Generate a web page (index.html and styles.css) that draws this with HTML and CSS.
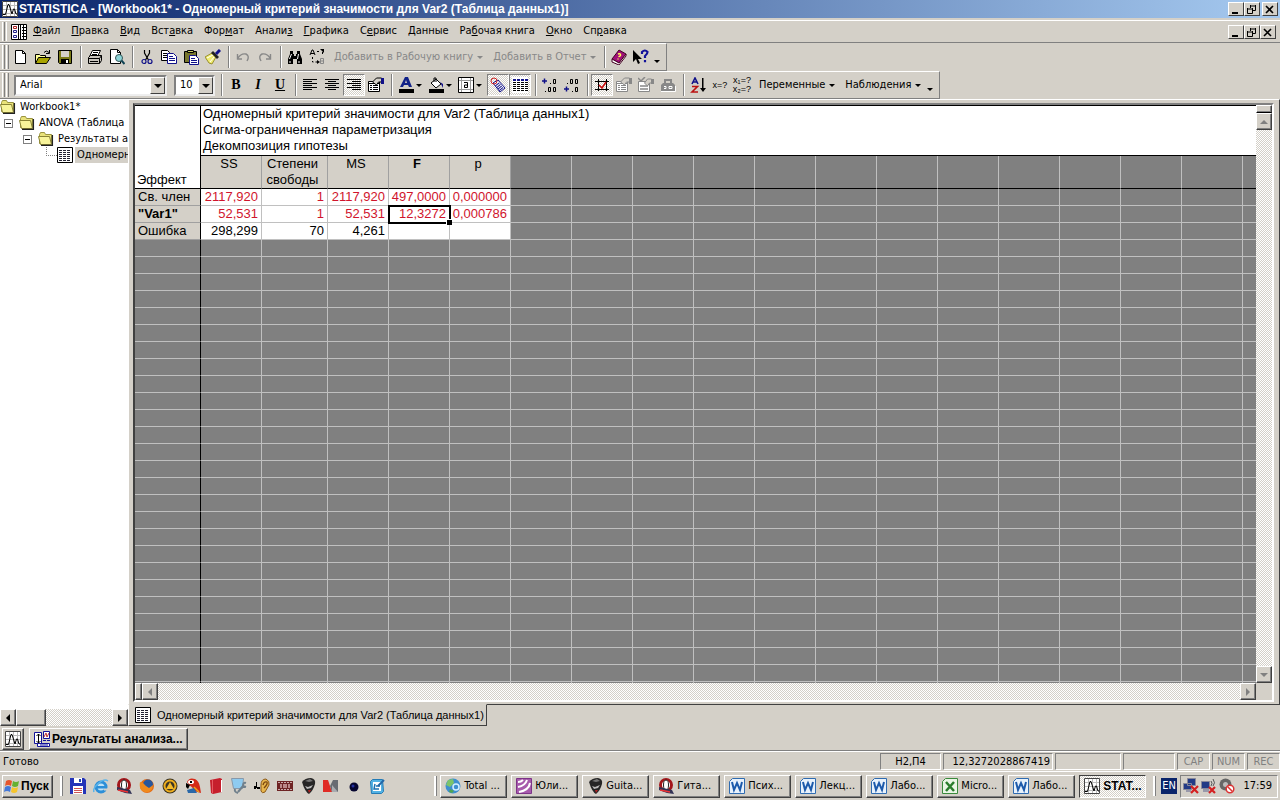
FILE: index.html
```html
<!DOCTYPE html>
<html lang="ru">
<head>
<meta charset="utf-8">
<title>STATISTICA - [Workbook1*]</title>
<link rel="stylesheet" href="styles.css">
</head>
<body>
<svg class="defs" aria-hidden="true">
  <symbol id="stat" viewBox="0 0 16 16"><path fill="#fff" d="M0 0h16v16H0z"/><path stroke="#bbb" fill="none" d="M4.500 0v16M8.500 0v16M12.500 0v16M0 4.500h16M0 8.500h16M0 12.500h16"/><path stroke="#000" fill="none" d="M1 13.500h2.500l2.500-10h1l3 9.500 1.500-5h1l1.500 5h1"/><path stroke="#444" fill="none" d="M.5.500h15v15H.5z"/></symbol>
  <symbol id="book" viewBox="0 0 16 16"><path fill="#fff" stroke="#000" d="M.5.500h15v15H.5z"/><path stroke="#000" d="M7.500 0v16M9.500 0v16M11 3.500h4M11 6.500h4M11 9.500h4M11 12.500h4M12.500 1v14"/><path fill="#fff" stroke="#a22" d="M2.500 2.500h3v2h-3z"/><path fill="#fff" stroke="#228" d="M2.500 6.500h3v2h-3zM2.500 11.500h3v2h-3z"/></symbol>
  <symbol id="sheet" viewBox="0 0 16 16"><path fill="#fff" stroke="#000" d="M.5.500h15v15H.5z"/><path stroke="#223" stroke-dasharray="3 1" d="M2 3.500h12M2 5.500h12M2 7.500h12M2 9.500h12M2 11.500h12M2 13.500h12"/></symbol>
  <symbol id="folder" viewBox="0 0 16 16"><path fill="#e9e27a" stroke="#9a9440" d="M1.500 3.500l1-2h4l1 2h6v9h-12z"/><path fill="#f8f49a" stroke="#8a8436" d="M.5 5.500h11l2 8h-11z"/><path stroke="#222" stroke-width="1.300" fill="none" d="M3 14.400h11.400V4"/></symbol>
  <symbol id="new" viewBox="0 0 16 16"><path fill="#fff" stroke="#000" d="M2.500 1.500h7l3 3v10h-10z"/><path fill="none" stroke="#000" d="M9.500 1.500v3h3"/></symbol>
  <symbol id="open" viewBox="0 0 16 16"><path fill="#ff9" stroke="#000" d="M.5 14V5.500h4l1 1h5v3"/><path fill="#a9a400" stroke="#000" d="M.5 14.500l3-6h12l-4 6z"/><path fill="none" stroke="#000" d="M9 3.500q2-3 5 0M14.500 1v3.500H11"/></symbol>
  <symbol id="save" viewBox="0 0 16 16"><path fill="#7b7b18" stroke="#000" d="M1.500 1.500h13v13h-12l-1-1z"/><path fill="#d4d0c8" d="M4 2h8v6H4z"/><path d="M4 10h8v5H4z"/><path fill="#fff" d="M9 11h2v3H9z"/></symbol>
  <symbol id="print" viewBox="0 0 16 16"><path fill="#fff" stroke="#000" d="M5.500 1.500h8l-3 6h-8z"/><path stroke="#000" d="M6 3.500h5M5 5.500h5"/><path fill="#c8c4bc" stroke="#000" d="M1.500 8.500l2-2h11l-2 3v5h-11zM1.500 9.500h11M14.500 6.500v5l-2 3M3 12.500h8"/></symbol>
  <symbol id="preview" viewBox="0 0 16 16"><path fill="#fff" stroke="#000" d="M1.500.500h7l3 3v11h-10z"/><path fill="none" stroke="#000" d="M8.500.500v3h3"/><circle cx="10" cy="9" r="3.500" fill="#8ed4d8" stroke="#355"/><path stroke="#145" stroke-width="2" d="M12.500 11.500l3 3.500"/></symbol>
  <symbol id="cut" viewBox="0 0 16 16"><path stroke="#000" stroke-width="1.200" fill="none" d="M5.500 1v3l4 7M10.500 1v3l-4 7"/><circle cx="5" cy="12.500" r="2" fill="none" stroke="#118" stroke-width="1.200"/><circle cx="11" cy="12.500" r="2" fill="none" stroke="#118" stroke-width="1.200"/></symbol>
  <symbol id="copy" viewBox="0 0 16 16"><path fill="#fff" stroke="#000" d="M.5 1.500h6l2 2v8h-8z"/><path stroke="#000" d="M2 4.500h4M2 6.500h4M2 8.500h4"/><path fill="#fff" stroke="#118" d="M6.500 4.500h6l3 3v7h-9z"/><path stroke="#118" d="M8 7.500h4M8 9.500h6M8 11.500h6"/></symbol>
  <symbol id="paste" viewBox="0 0 16 16"><path fill="#77752c" stroke="#000" d="M1.500 2.500h12v11h-12z"/><path fill="#cc6" stroke="#000" d="M4.500 3.500v-2h6v2z"/><path fill="#fff" stroke="#118" d="M6.500 6.500h6l3 3v6h-9z"/><path stroke="#118" d="M8 9.500h4M8 11.500h6M8 13.500h6"/></symbol>
  <symbol id="brush" viewBox="0 0 16 16"><path fill="#f0ec70" stroke="#998f30" d="M0 8l7-4 4 4-4 7-3-1-2-3z"/><path stroke="#fff" d="M2 9l6-3M5 13l4-5"/><path fill="#222" d="M6 4l2-2 6 6-2 2z"/><path stroke="#118" stroke-width="3" d="M11 5l4-4"/></symbol>
  <symbol id="undo" viewBox="0 0 16 16"><path fill="none" stroke="#888" stroke-width="1.400" d="M3 9q3-5 8-4 4 2 1 7M2.500 5v5H7"/></symbol>
  <symbol id="redo" viewBox="0 0 16 16"><path fill="none" stroke="#888" stroke-width="1.400" d="M13 9Q10 4 5 5q-4 2-1 7M13.500 5v5H9"/></symbol>
  <symbol id="find" viewBox="0 0 16 16"><path d="M3 2h3v3h1v2h2V5h1V2h3v3l2 5v5h-5v-5H6v5H1v-5l2-5z"/><path stroke="#fff" d="M4.500 5L2.500 10M11.500 5l-1 5M3 12v2M12 12v2"/></symbol>
  <symbol id="replace" viewBox="0 0 16 16"><path fill="none" stroke="#000" d="M1 6l2-5h1l2 5M2 4.500h3"/><path fill="none" stroke="#000" stroke-dasharray="2 2" d="M8 2.500h4M13.500 3v4M3.500 8v5h5"/><path d="M11 0h4v4zM8 11l3 2-3 2z"/><path fill="none" stroke="#888" d="M11.500 9.500h3v5h-3zM11.500 12h3"/></symbol>
  <symbol id="help" viewBox="0 0 16 16"><path fill="#a0107a" stroke="#402" d="M1 10L8 1l7 4-7 9z"/><path fill="#fff" stroke="#402" d="M1 10v3l7 3 7-9V5l-7 9z"/><path fill="none" stroke="#ff5" stroke-width="1.400" d="M7 5q3-1 2.500 1.500L7.500 8M7 9.500v1"/></symbol>
  <symbol id="what" viewBox="0 0 16 16"><path d="M0 1v12l3-3 2 5 2-1-2-4h4z"/><path fill="none" stroke="#119" stroke-width="2.200" d="M9 5V3q3-3 5.500 0 0 2-2.500 4v2M12 11v2.300"/></symbol>
  <symbol id="left" viewBox="0 0 16 16"><path stroke="#000" d="M1 2.500h14M1 4.500h9M1 6.500h14M1 8.500h9M1 10.500h14M1 12.500h9"/></symbol>
  <symbol id="center" viewBox="0 0 16 16"><path stroke="#000" d="M1 2.500h14M4 4.500h8M1 6.500h14M4 8.500h8M1 10.500h14M4 12.500h8"/></symbol>
  <symbol id="right" viewBox="0 0 16 16"><path stroke="#000" d="M1 2.500h14M6 4.500h9M1 6.500h14M6 8.500h9M1 10.500h14M6 12.500h9"/></symbol>
  <symbol id="props" viewBox="0 0 16 16"><path fill="#fff" stroke="currentColor" d="M.5 4.500h11v10H.5z"/><path stroke="currentColor" d="M1 6.500h10M2 8.500h2M5 8.500h5M2 10.500h2M5 10.500h5M2 12.500h2M5 12.500h5"/><path fill="#d4d0c8" stroke="currentColor" d="M4.500 5l4-4h5v4h-3l-2 3z"/><path fill="var(--cuff,#118)" d="M13 1h3v6h-3z"/></symbol>
  <symbol id="check" viewBox="0 0 16 16"><path fill="#fff" stroke="currentColor" d="M.5 4.500h11v10H.5z"/><path stroke="currentColor" stroke-width="1.500" fill="none" d="M2 9h8M2 12h8M0 1l3 3 4-4"/><path fill="#d4d0c8" stroke="currentColor" d="M6.500 6l3-4h4v4h-2l-2 3z"/><path fill="currentColor" d="M13 2h3v5h-3z"/></symbol>
  <symbol id="bag" viewBox="0 0 16 16"><path fill="none" stroke="currentColor" stroke-width="2" d="M5 6V3h6v3"/><path fill="currentColor" d="M3 6h10l2 2v6H1V8z"/><path stroke="#fff" fill="none" d="M1 14.500h14.500V9M4 9.500h2v2H4M9 9.500h3v2H9z"/></symbol>
  <symbol id="color" viewBox="0 0 16 16"><path fill="#128" d="M7 0h3l4 10h-3l-1-2H6l-1 2H2zM8 3L7 6h2z"/><path d="M1 12h15v4H1z"/></symbol>
  <symbol id="fill" viewBox="0 0 16 16"><path fill="#fff" stroke="#000" d="M3 6l5-4 5 5-5 4zM6 5V1h2v4"/><path fill="#118" d="M12 5l3 2v4z"/><path d="M1 12h15v4H1z"/></symbol>
  <symbol id="border" viewBox="0 0 16 16"><path fill="#fff" stroke="#000" d="M.5.500h15v15H.5z"/><path stroke="#999" d="M1 3.500h14M1 12.500h14M3.500 1v14M12.500 1v14"/><path fill="none" stroke="#000" d="M6 5.500h3.500v5h-3v-2.500h3"/></symbol>
  <symbol id="tag" viewBox="0 0 16 16"><path fill="#fff" stroke="#118" d="M3 6l5-3 7 8-5 4z"/><path stroke="#118" stroke-dasharray="1 1" stroke-width="5" d="M7 7l5 6"/><circle cx="4" cy="4" r="3" fill="none" stroke="#c22"/></symbol>
  <symbol id="lines" viewBox="0 0 16 16"><path fill="#fff" d="M0 0h16v16H0z"/><path stroke="#118" stroke-dasharray="3 1" stroke-width="2" d="M1 3h15"/><path stroke="#000" stroke-dasharray="3 1" d="M1 5.500h15M1 7.500h15M1 9.500h15M1 11.500h15M1 13.500h15"/></symbol>
  <symbol id="decinc" viewBox="0 0 16 16"><path fill="none" stroke="#118" stroke-width="1.500" d="M0 4h5M2.500 1.500v5"/><path fill="none" stroke="#000" d="M8 6.500h1M11.500 2.500h2v4h-2zM3 14.500h1M6.500 10.500h2v4h-2zM11.500 10.500h2v4h-2z"/></symbol>
  <symbol id="decdec" viewBox="0 0 16 16"><path fill="none" stroke="#118" stroke-width="1.500" d="M0 12h5M2.500 9.500v5"/><path fill="none" stroke="#000" d="M3 6.500h1M6.500 2.500h2v4h-2zM11.500 2.500h2v4h-2zM8 14.500h1M11.500 10.500h2v4h-2z"/></symbol>
  <symbol id="marks" viewBox="0 0 16 16"><path fill="none" stroke="#000" d="M1 4.500h14M1 12.500h14M4.500 2v12M12.500 2v12"/><path fill="none" stroke="#c11" stroke-width="1.600" d="M5 8l3 3 4-6"/></symbol>
  <symbol id="sort" viewBox="0 0 16 16"><path fill="none" stroke="#118" stroke-width="1.600" d="M2 7l3-6 3 6M3 5h4"/><path fill="none" stroke="#b11" stroke-width="1.600" d="M2 9.500h5.500L2 15h6"/><path d="M12 1h1.500v10H16l-3 4-3-4h2z"/></symbol>
  <symbol id="min" viewBox="0 0 10 9"><path d="M1 7h6v2H1z"/></symbol>
  <symbol id="max" viewBox="0 0 10 9"><path fill="none" stroke="#000" d="M3 1h6M3.500 0v3M8.500 0v5.500H6M0 4h6M.5 3v5.500h5V3"/></symbol>
  <symbol id="close" viewBox="0 0 10 9"><path stroke="#000" stroke-width="1.600" d="M1 1l7 7M8 1L1 8"/></symbol>
  <symbol id="result" viewBox="0 0 16 16"><path fill="#fff" stroke="#119" d="M.5 1.500h7v11h-7zM9.500.500h6v7h-6z"/><path stroke="#000" fill="none" d="M4.500 3v9M2.500 5l2-2 2 2M2.500 10l2 2 2-2"/><path fill="none" stroke="#b33" d="M10 6l2-4 1 4 2-4"/><path fill="#fff" stroke="#119" d="M3.500 12.500h12v3h-12z"/><path stroke="#119" d="M9 9.500h3M13 9.500h3M6 14h8"/></symbol>
  <symbol id="flag" viewBox="0 0 16 16"><path fill="#e6552b" d="M2 3q3-2 6 0L7 8Q4 6 1 8z"/><path fill="#66b132" d="M9 3q3 2 6 0l-1 5q-3 2-6 0z"/><path fill="#4478d8" d="M1 9q3-2 6 0l-1 5q-3-2-6 0z"/><path fill="#f6c52c" d="M8 9q3 2 6 0l-1 5q-3 2-6 0z"/></symbol>
  <symbol id="disk" viewBox="0 0 16 16"><path fill="#2434b8" d="M0 0h14l2 2v14H0z"/><path fill="#fff" d="M4 0h8v5H4zM3 8h10v8H3z"/><path fill="#24a" d="M9 1h2v3H9z"/><path stroke="#c55" d="M4 10.500h8M4 12.500h8M4 14.500h8"/></symbol>
  <symbol id="ie" viewBox="0 0 16 16"><circle cx="8" cy="9" r="5" fill="#bfe2f6" stroke="#2c8fd8" stroke-width="3"/><path fill="#2c8fd8" d="M4 8h10v2.500H4z"/><path fill="#d4d0c8" d="M11 10.500h4v2h-4z"/><path fill="none" stroke="#5ab4ea" stroke-width="1.500" d="M1 14C-1 10 10-1 15 3"/></symbol>
  <symbol id="opera" viewBox="0 0 16 16"><ellipse cx="8" cy="7" rx="5.500" ry="5.500" fill="#fff" stroke="#a3161b" stroke-width="3"/><ellipse cx="8" cy="7" rx="2.500" ry="5" fill="#fff" stroke="#222"/><path fill="#335" d="M1 9l13 3 2 4-7-1-8-3z"/><path stroke="#e33" stroke-width="1.500" d="M2 12l10 2"/></symbol>
  <symbol id="fox" viewBox="0 0 16 16"><circle cx="8" cy="8" r="7" fill="#e46d17"/><circle cx="9" cy="6.500" r="5" fill="#28569c"/><path fill="#f08a1d" d="M1 4l3 1 3 3 3 2 4-3c0 5-4 8-8 7S0 10 1 4z"/></symbol>
  <symbol id="aimp" viewBox="0 0 16 16"><circle cx="8" cy="8" r="7.500" fill="#3b3525"/><circle cx="8" cy="8" r="5.500" fill="none" stroke="#efae1d" stroke-width="2"/><path fill="#f4bb2a" d="M8 4l4 7H4z"/></symbol>
  <symbol id="parrot" viewBox="0 0 16 16"><path fill="#d52a18" d="M2 4q2-5 8-3 4 2 5 8l1 6-7-2q-1-4-5-6z"/><ellipse cx="6" cy="4" rx="3" ry="2" fill="#fff"/><path d="M1 5l4 2-2 4-2-2zM5 3h2v2H5z"/><path fill="#2a68a8" d="M2 12l7-2 3 5H3z"/><path stroke="#eaa51c" stroke-width="1.500" d="M9 9l5 5"/></symbol>
  <symbol id="redbook" viewBox="0 0 16 16"><path fill="#c61f2c" d="M2 2l10-2 2 1v13l-9 2-2-1z"/><path fill="#fff" d="M13 2h1v12h-1z"/><path fill="#e65a62" d="M4 2h1v13H4z"/></symbol>
  <symbol id="tools" viewBox="0 0 16 16"><path fill="#8ecbf0" stroke="#89a" d="M.5.500h12l-1 10h-9z"/><path fill="none" stroke="#70808c" stroke-width="2" d="M7 14l5-6M15 5q-3-1-3 3l3 1M4 11q-1 3 3 4"/></symbol>
  <symbol id="ear" viewBox="0 0 16 16"><path fill="#e7b64d" stroke="#8d5a18" d="M7 7q0-6 5-6 4 2 3 6l-4 7q-3 2-4-1z"/><path fill="none" stroke="#7a4610" stroke-width="1.300" d="M9 7q1-4 4-3 1 2-3 6"/><path d="M0 8h2v3H0zM2 4h1v6H2zM3 9h3v2H3z"/></symbol>
  <symbol id="film" viewBox="0 0 16 16"><path fill="#6e2424" d="M0 3h16v10H0z"/><path stroke="#caa" stroke-dasharray="2 1" d="M1 4.500h14M1 11.500h14"/><path fill="#b88" d="M3 6h2v4H3zM6 6h4v4H6zM11 6h2v4h-2z"/></symbol>
  <symbol id="pick" viewBox="0 0 16 16"><path fill="#262626" d="M2 4q3-4 9-4 5 1 4 6-2 7-6 10-4-2-7-12z"/><path fill="#bbb" d="M5 8l3 1 5-2-2 3-4 1z"/><path fill="#a22" d="M8 12h3l-2 3z"/><path fill="#777" d="M5 3l5-2 3 2-4 1z"/></symbol>
  <symbol id="mx" viewBox="0 0 16 16"><path fill="#e02b25" d="M0 2h5l4 12H0z"/><path fill="#676b72" d="M15 2v12H9L7 8l3-6z"/><path fill="#a8abb0" d="M9 7l6 7H9z"/></symbol>
  <symbol id="ball" viewBox="0 0 16 16"><circle cx="8" cy="9" r="4.500" fill="#050530"/><circle cx="7" cy="8" r="1.500" fill="#2430a0"/></symbol>
  <symbol id="note" viewBox="0 0 16 16"><path fill="#53b2e4" stroke="#247bb5" d="M1.500 3.500l2-2h10l1 12-2 2h-10z"/><path fill="#fff" d="M4 4h8v9H4z"/><path fill="none" stroke="#1b70b0" stroke-width="1.500" d="M6 6l-1 5h5M7 8h4"/><path stroke="#2367a8" stroke-width="2" d="M9 8l6-6"/></symbol>
  <symbol id="globe" viewBox="0 0 16 16"><circle cx="8" cy="8" r="7.500" fill="#3e8fd0"/><path fill="#7cc46a" d="M3 2l5-1 1 4-4 4-4-2z"/><circle cx="11" cy="9" r="3" fill="none" stroke="#d5efff" stroke-width="1.500"/><path fill="#4fa551" d="M5 11l4 2-2 2-3-1z"/></symbol>
  <symbol id="purple" viewBox="0 0 16 16"><path fill="#a65aac" stroke="#7d3488" d="M.5.500h15v15H.5z"/><path fill="none" stroke="#fff" stroke-width="2" d="M2 4q3 0 5-2M2 9q7-1 9-7M3 14q10-2 11-9"/></symbol>
  <symbol id="word" viewBox="0 0 16 16"><path fill="#e8f2fc" stroke="#2f6bb0" d="M.5 3.500l3-3h12v15H.5z"/><path fill="none" stroke="#1c5aab" stroke-width="2" d="M3 4l2 8 3-7 3 7 2-8"/></symbol>
  <symbol id="excel" viewBox="0 0 16 16"><path fill="#eaf6e6" stroke="#3a8a3c" d="M.5 3.500l3-3h12v15H.5z"/><path fill="none" stroke="#2a7d2c" stroke-width="2.500" d="M4 4l8 9M12 4l-8 9"/></symbol>
  <symbol id="net" viewBox="0 0 16 16"><path fill="#223a86" stroke="#889" d="M4.500.500h8v7h-8zM.5 5.500h8v6h-8z"/><path fill="#99a" d="M3 12h5v2H3z"/><path stroke="#d42020" stroke-width="2.200" d="M8 8l7 7M15 8l-7 7"/></symbol>
  <symbol id="wifi" viewBox="0 0 16 16"><path fill="#223a86" stroke="#889" d="M.5 3.500h8v7h-8z"/><path fill="#99a" d="M2 11h6v3H2z"/><path fill="none" stroke="#555" d="M10 3q2 2 0 5M12 1q3 4 0 7"/><path stroke="#d42020" stroke-width="2.200" d="M8 9l6 6M14 9l-6 6"/></symbol>
  <symbol id="mute" viewBox="0 0 16 16"><circle cx="6.500" cy="6.500" r="6" fill="#666"/><circle cx="6.500" cy="6.500" r="2.500" fill="#bbb"/><circle cx="11" cy="11" r="3.800" fill="#fff" stroke="#d33" stroke-width="1.500"/><path stroke="#d33" stroke-width="1.500" d="M8.500 8.500l5 5"/></symbol>
</svg>

<header class="titlebar">
  <svg class="ic"><use href="#stat"/></svg>
  <h1>STATISTICA - [Workbook1* - Одномерный критерий значимости для Var2 (Таблица данных1)]</h1>
  <div class="winbtns">
    <button aria-label="Свернуть"><svg><use href="#min"/></svg></button>
    <button aria-label="Восстановить"><svg><use href="#max"/></svg></button>
    <button class="apart" aria-label="Закрыть"><svg><use href="#close"/></svg></button>
  </div>
</header>

<nav class="menubar">
  <span class="grip"></span>
  <svg class="ic"><use href="#book"/></svg>
  <button><u>Ф</u>айл</button><button><u>П</u>равка</button><button><u>В</u>ид</button><button>Вст<u>а</u>вка</button><button>Фор<u>м</u>ат</button><button>Анали<u>з</u></button><button><u>Г</u>рафика</button><button>С<u>е</u>рвис</button><button><u>Д</u>анные</button><button>Ра<u>б</u>очая книга</button><button><u>О</u>кно</button><button>Сп<u>р</u>авка</button>
  <div class="winbtns">
    <button aria-label="Свернуть книгу"><svg><use href="#min"/></svg></button>
    <button aria-label="Восстановить книгу"><svg><use href="#max"/></svg></button>
    <button aria-label="Закрыть книгу"><svg><use href="#close"/></svg></button>
  </div>
</nav>

<div class="toolbar">
  <span class="grip"></span>
  <button class="tb" aria-label="Создать"><svg class="ic"><use href="#new"/></svg></button>
  <button class="tb" aria-label="Открыть"><svg class="ic"><use href="#open"/></svg></button>
  <button class="tb" aria-label="Сохранить"><svg class="ic"><use href="#save"/></svg></button>
  <span class="sep"></span>
  <button class="tb" aria-label="Печать"><svg class="ic"><use href="#print"/></svg></button>
  <button class="tb" aria-label="Просмотр"><svg class="ic"><use href="#preview"/></svg></button>
  <span class="sep"></span>
  <button class="tb" aria-label="Вырезать"><svg class="ic"><use href="#cut"/></svg></button>
  <button class="tb" aria-label="Копировать"><svg class="ic"><use href="#copy"/></svg></button>
  <button class="tb" aria-label="Вставить"><svg class="ic"><use href="#paste"/></svg></button>
  <button class="tb" aria-label="Формат по образцу"><svg class="ic"><use href="#brush"/></svg></button>
  <span class="sep"></span>
  <button class="tb" aria-label="Отменить" disabled><svg class="ic"><use href="#undo"/></svg></button>
  <button class="tb" aria-label="Вернуть" disabled><svg class="ic"><use href="#redo"/></svg></button>
  <span class="sep"></span>
  <button class="tb" aria-label="Найти"><svg class="ic"><use href="#find"/></svg></button>
  <button class="tb" aria-label="Заменить"><svg class="ic"><use href="#replace"/></svg></button>
  <button class="txt" disabled>Добавить в Рабочую книгу<i class="arr"></i></button>
  <button class="txt" disabled>Добавить в Отчет<i class="arr"></i></button>
  <span class="sep"></span>
  <button class="tb" aria-label="Справка"><svg class="ic"><use href="#help"/></svg></button>
  <button class="tb" aria-label="Что это?"><svg class="ic"><use href="#what"/></svg></button>
  <button class="more" aria-label="Ещё кнопки"><i class="arr"></i></button>
</div>

<div class="toolbar">
  <span class="grip"></span>
  <span class="combo font"><select aria-label="Шрифт"><option>Arial</option></select><i></i></span>
  <span class="combo size"><select aria-label="Размер"><option>10</option></select><i></i></span>
  <span class="sep"></span>
  <button class="tb fmt"><b>B</b></button>
  <button class="tb fmt"><em>I</em></button>
  <button class="tb fmt"><u>U</u></button>
  <span class="sep"></span>
  <button class="tb" aria-label="По левому краю"><svg class="ic"><use href="#left"/></svg></button>
  <button class="tb" aria-label="По центру"><svg class="ic"><use href="#center"/></svg></button>
  <button class="tb on" aria-label="По правому краю"><svg class="ic"><use href="#right"/></svg></button>
  <button class="tb" aria-label="Формат"><svg class="ic"><use href="#props"/></svg></button>
  <span class="sep"></span>
  <button class="tb split" aria-label="Цвет текста"><svg class="ic"><use href="#color"/></svg><i class="arr"></i></button>
  <button class="tb split" aria-label="Заливка"><svg class="ic"><use href="#fill"/></svg><i class="arr"></i></button>
  <button class="tb split" aria-label="Границы"><svg class="ic"><use href="#border"/></svg><i class="arr"></i></button>
  <div class="group">
    <button class="tb on" aria-label="Метки"><svg class="ic"><use href="#tag"/></svg></button>
    <button class="tb on" aria-label="Сетка"><svg class="ic"><use href="#lines"/></svg></button>
  </div>
  <span class="sep"></span>
  <button class="tb" aria-label="Увеличить разрядность"><svg class="ic"><use href="#decinc"/></svg></button>
  <button class="tb" aria-label="Уменьшить разрядность"><svg class="ic"><use href="#decdec"/></svg></button>
  <span class="sep"></span>
  <button class="tb on" aria-label="Отмеченные ячейки"><svg class="ic"><use href="#marks"/></svg></button>
  <button class="tb" disabled aria-label="Свойства"><svg class="ic"><use href="#props"/></svg></button>
  <button class="tb" disabled aria-label="Проверка"><svg class="ic"><use href="#check"/></svg></button>
  <button class="tb" disabled aria-label="Набор"><svg class="ic"><use href="#bag"/></svg></button>
  <span class="sep"></span>
  <button class="tb" aria-label="Сортировка"><svg class="ic"><use href="#sort"/></svg></button>
  <button class="tb calc"><span>x=?</span></button>
  <button class="tb calc"><span>x₁=?</span><span>x₂=?</span></button>
  <button class="txt">Переменные<i class="arr"></i></button>
  <button class="txt">Наблюдения<i class="arr"></i></button>
  <button class="more" aria-label="Ещё кнопки"><i class="arr"></i></button>
</div>

<main class="work">
  <aside class="side">
    <ul class="tree">
      <li><svg class="ic"><use href="#folder"/></svg><span>Workbook1*</span></li>
      <li class="l1"><i class="box"></i><svg class="ic"><use href="#folder"/></svg><span>ANOVA (Таблица</span></li>
      <li class="l2"><i class="box"></i><svg class="ic"><use href="#folder"/></svg><span>Результаты а</span></li>
      <li class="l3"><i class="twig"></i><svg class="ic"><use href="#sheet"/></svg><span class="sel">Одномерн</span></li>
    </ul>
    <div class="bar"><button class="sb lt" aria-label="Влево"></button><span class="thumb"></span><button class="sb rt" aria-label="Вправо"></button></div>
  </aside>
  <section class="doc">
    <div class="frame">
      <div class="inner">
        <div class="sheet">
          <table>
            <colgroup id="cols"><col class="c-head"><col class="c"><col class="c-wide"></colgroup>
            <tbody id="rows">
              <tr class="info"><th class="corner" rowspan="2">Эффект</th><td colspan="18">Одномерный критерий значимости для Var2 (Таблица данных1)<br>Сигма-ограниченная параметризация<br>Декомпозиция гипотезы</td></tr>
              <tr class="heads"><th>SS</th><th>Степени<br>свободы</th><th>MS</th><th class="cur">F</th><th>p</th></tr>
              <tr class="data red"><th>Св. член</th><td>2117,920</td><td>1</td><td>2117,920</td><td>497,0000</td><td>0,000000</td></tr>
              <tr class="data red"><th class="cur">"Var1"</th><td>52,531</td><td>1</td><td>52,531</td><td class="active">12,3272</td><td>0,000786</td></tr>
              <tr class="data"><th>Ошибка</th><td>298,299</td><td>70</td><td>4,261</td><td></td><td></td></tr>
            </tbody>
          </table>
        </div>
        <div class="vbar"><span class="thumb"></span><button class="sb up off" aria-label="Вверх"></button><button class="sb dn off" aria-label="Вниз"></button></div>
        <div class="hbar"><span class="thumb"></span><button class="sb lt off" aria-label="Влево"></button><button class="sb rt off" aria-label="Вправо"></button></div>
      </div>
    </div>
    <button class="tab"><svg class="ic"><use href="#sheet"/></svg>Одномерный критерий значимости для Var2 (Таблица данных1)</button>
  </section>
</main>

<div class="docked">
  <button class="raised" aria-label="STATISTICA"><svg class="ic"><use href="#stat"/></svg></button>
  <button class="raised wide"><svg class="ic"><use href="#result"/></svg>Результаты анализа...</button>
</div>

<div class="status">
  <span class="msg">Готово</span>
  <span class="cell s1">Н2,П4</span><span class="cell s2">12,3272028867419</span><span class="cell s3"></span><span class="cell s4"></span><span class="cell k">CAP</span><span class="cell k">NUM</span><span class="cell k">REC</span>
</div>

<footer class="taskbar">
  <button class="raised start"><svg class="ic"><use href="#flag"/></svg>Пуск</button>
  <span class="rail"></span>
  <div class="quick">
    <svg class="ic"><use href="#disk"/></svg><svg class="ic"><use href="#ie"/></svg><svg class="ic"><use href="#opera"/></svg><svg class="ic"><use href="#fox"/></svg><svg class="ic"><use href="#aimp"/></svg><svg class="ic"><use href="#parrot"/></svg><svg class="ic"><use href="#redbook"/></svg><svg class="ic"><use href="#tools"/></svg><svg class="ic"><use href="#ear"/></svg><svg class="ic"><use href="#film"/></svg><svg class="ic"><use href="#pick"/></svg><svg class="ic"><use href="#mx"/></svg><svg class="ic"><use href="#ball"/></svg><svg class="ic"><use href="#note"/></svg>
  </div>
  <span class="rail"></span>
  <div class="tasks">
    <button class="raised"><svg class="ic"><use href="#globe"/></svg>Total ...</button>
    <button class="raised"><svg class="ic"><use href="#purple"/></svg>Юли...</button>
    <button class="raised"><svg class="ic"><use href="#pick"/></svg>Guita...</button>
    <button class="raised"><svg class="ic"><use href="#opera"/></svg>Гита...</button>
    <button class="raised"><svg class="ic"><use href="#word"/></svg>Псих...</button>
    <button class="raised"><svg class="ic"><use href="#word"/></svg>Лекц...</button>
    <button class="raised"><svg class="ic"><use href="#word"/></svg>Лабо...</button>
    <button class="raised"><svg class="ic"><use href="#excel"/></svg>Micro...</button>
    <button class="raised"><svg class="ic"><use href="#word"/></svg>Лабо...</button>
    <button class="raised down"><svg class="ic"><use href="#stat"/></svg>STAT...</button>
  </div>
  <span class="rail"></span>
  <span class="lang">EN</span>
  <div class="tray"><svg class="ic"><use href="#net"/></svg><svg class="ic"><use href="#wifi"/></svg><svg class="ic"><use href="#mute"/></svg><time>17:59</time></div>
</footer>
<script src="grid.js"></script>
</body>
</html>
```
FILE: styles.css
```css
* { box-sizing: border-box; }
:root {
  --face: #d4d0c8;
  --shade: #808080;
  --dark: #404040;
  --dither: repeating-conic-gradient(#fff 0 25%, #d4d0c8 0 50%) 0 0 / 2px 2px;
}
body {
  margin: 0;
  height: 100vh;
  display: flex;
  flex-direction: column;
  overflow: hidden;
  background: var(--face);
  color: #000;
  font: 11px/14px "DejaVu Sans Condensed", "DejaVu Sans", sans-serif;
}
button { font: inherit; color: inherit; background: none; border: 0; padding: 0; margin: 0; white-space: nowrap; }
.defs { display: none; }
.ic { width: 16px; height: 16px; flex: none; display: block; }

.titlebar { display: flex; align-items: center; height: 18px; padding: 0 2px; gap: 1px; flex: none;
  background: linear-gradient(90deg, #0a246a, #a6caf0); }
.titlebar h1 { margin: 0; flex: 1; color: #fff; font: bold 12px/18px "Liberation Sans", Arial, sans-serif; white-space: nowrap; overflow: hidden; }
.winbtns { display: flex; margin-left: auto; }
.winbtns button { width: 16px; height: 14px; padding: 1px 0 0 2px; background: var(--face);
  border: 1px solid; border-color: #fff var(--dark) var(--dark) #fff; }
.winbtns .apart { margin-left: 2px; }
.winbtns svg { width: 10px; height: 9px; display: block; }

.grip { width: 8px; align-self: stretch; flex: none; margin: 1px 0;
  background: linear-gradient(90deg, #fff 1px, var(--face) 1px 2px, var(--shade) 2px 3px, transparent 3px 4px, #fff 4px 5px, var(--face) 5px 6px, var(--shade) 6px 7px, transparent 7px) 2px 0 no-repeat; }
.menubar { display: flex; align-items: center; height: 23px; margin-top: 2px; padding: 0 4px 0 0; flex: none;
  border-top: 1px solid #fff; border-bottom: 1px solid var(--shade); }
.menubar > .ic { margin: 0 0 0 3px; }
.menubar > button { padding: 0 5px 2px 6px; }

.toolbar { display: flex; align-items: center; align-self: flex-start; height: 28px; padding-right: 3px; flex: none;
  border: 1px solid; border-color: #fff var(--shade) var(--shade) #fff; border-left: 0; }
.toolbar .grip { width: 10px; }
.toolbar + .toolbar .grip { width: 14px; }
.tb { width: 22px; height: 22px; display: flex; align-items: center; justify-content: center; flex: none; border: 1px solid transparent; }
.tb.on { background: var(--dither); border-color: var(--shade) #fff #fff var(--shade); }
.tb.split { width: 30px; gap: 2px; }
.tb:disabled { color: #888; --cuff: #888; }
.group { display: flex; margin-left: 2px; }
.fmt { font: bold 14px/20px "Liberation Serif", "Times New Roman", serif; }
.tb.calc { flex-direction: column; font: 9px/9px "Liberation Sans", Arial, sans-serif; }
.sep { width: 8px; height: 22px; flex: none; background: linear-gradient(90deg, var(--shade) 1px, #fff 1px 2px, transparent 2px) 4px 0 no-repeat; }
.arr { display: block; width: 0; height: 0; border: 3px solid transparent; border-top-color: currentColor; border-bottom: 0; flex: none; }
.txt { display: flex; align-items: center; gap: 4px; padding: 0 4px 0 6px; }
.txt:disabled { color: #888; }
.more { align-self: flex-end; padding: 0 3px 7px 2px; }
.combo { position: relative; display: block; height: 21px; margin-right: 7px; }
.combo select { appearance: none; width: 100%; height: 21px; padding: 0 4px; font: inherit; color: #000; background: #fff; border: 2px solid; border-color: var(--shade) #eee #eee var(--shade); border-radius: 0; }
.combo i { position: absolute; right: 2px; top: 2px; width: 15px; height: 17px; background: var(--face); border: 1px solid; border-color: #fff var(--dark) var(--dark) #fff; pointer-events: none; }
.combo i::after { content: ""; position: absolute; left: 3px; top: 6px; border: 4px solid transparent; border-width: 4px 4px 0; border-top-color: #000; }
.font { width: 153px; }
.size { width: 41px; margin-right: 2px; }

.work { flex: 1; min-height: 0; display: flex; }
.side { width: 128px; flex: none; display: flex; flex-direction: column; background: #fff; }
.tree { list-style: none; margin: 0; padding: 0; flex: 1; overflow: hidden; }
.tree li { display: flex; align-items: center; height: 16px; white-space: nowrap; }
.tree span { margin-left: 2px; padding: 0 2px; line-height: 16px; }
.tree .sel { background: var(--face); padding-right: 0; }
.tree .l1 { padding-left: 4px; }
.tree .l2 { padding-left: 23px; }
.tree .l3 { padding-left: 46px; }
.box { width: 9px; height: 9px; margin-right: 6px; border: 1px solid var(--shade); background: linear-gradient(#000, #000) 1px 3px / 5px 1px no-repeat; flex: none; }
.twig { width: 11px; height: 9px; border: 1px dotted var(--shade); border-width: 0 0 1px 1px; align-self: flex-start; flex: none; }

.bar, .hbar { display: flex; background: var(--dither); height: 17px; flex: none; }
.sb, .thumb { display: block; flex: none; background: var(--face); border: 1px solid; border-color: #fff var(--dark) var(--dark) #fff; box-shadow: inset -1px -1px var(--shade); }
.sb { width: 16px; height: 17px; display: flex; align-items: center; justify-content: center; }
.sb::after { content: ""; border: 4px solid transparent; }
.lt::after { border-right-color: #000; border-left: 0; }
.rt::after { border-left-color: #000; border-right: 0; }
.up::after { border-bottom-color: #000; border-top: 0; }
.dn::after { border-top-color: #000; border-bottom: 0; }
.lt.off::after { border-right-color: var(--shade); }
.rt.off::after { border-left-color: var(--shade); }
.up.off::after { border-bottom-color: var(--shade); }
.dn.off::after { border-top-color: var(--shade); }
.rt, .dn { margin-left: auto; }
.bar .thumb { width: 30px; }

.doc { flex: 1; min-width: 0; display: flex; flex-direction: column; align-items: flex-start; }
.frame { flex: 1; min-height: 0; width: 100%; display: flex; padding: 3px 5px 2px 4px; border: 1px solid; border-color: #fff var(--dark) var(--dark) #fff; }
.inner { flex: 1; min-width: 0; display: grid; grid-template: minmax(0, 1fr) 17px / minmax(0, 1fr) 16px; border: 2px solid; border-color: var(--shade) #fff #fff var(--dark); }
.sheet { overflow: hidden; background: #808080; border-top: 1px solid #000; }
.vbar { display: flex; flex-direction: column; background: var(--dither); }
.vbar .thumb { height: 8px; border-bottom-color: #000; }
.vbar .dn { margin: auto 0 0; }
.hbar .thumb { width: 7px; }

table { table-layout: fixed; width: max-content; border-collapse: separate; border-spacing: 0; font: 13px/16px "Liberation Sans", Arial, sans-serif; }
.c-head, .c-wide { width: 66px; }
.c { width: 61px; }
th, td { padding: 0; font-weight: normal; white-space: nowrap; border: 1px solid #c0c0c0; border-width: 0 1px 1px 0; }
.info td { height: 50px; padding: 0 2px; background: #fff; border-color: #000; vertical-align: top; text-align: left; }
.corner { background: #fff; border-color: #000; vertical-align: bottom; text-align: left; padding-left: 2px; }
.heads th, .heads td { height: 33px; border-bottom-color: #000; vertical-align: top; }
.heads th { background: var(--face); border-right-color: #a0a0a0; padding-right: 4px; }
.data th { background: var(--face); text-align: left; padding-left: 3px; border-color: #808080 #000 #a0a0a0; }
.data td, .data th, .blank td { height: 17px; }
.data td { text-align: right; padding-right: 3px; background: #fff; }
.red td { color: #d0142c; }
.data .out { background: none; }
.cur, th.cur { font-weight: bold; }
.blank td:first-child { border-right-color: #000; }
.data .active { position: relative; outline: 2px solid #000; outline-offset: -1px; }
.active::after { content: ""; position: absolute; right: -3px; bottom: -3px; width: 5px; height: 5px; background: #000; border: 1px solid #fff; border-width: 1px 0 0 1px; }

.tab { display: flex; align-items: center; gap: 6px; height: 22px; padding: 0 2px 0 6px; border: 1px solid; border-color: var(--face) var(--dark) var(--dark) #fff; font: 11px/14px "Liberation Sans", Arial, sans-serif; margin-top: -1px; position: relative; background: var(--face); }

.raised { display: flex; align-items: center; background: var(--face); border: 1px solid; border-color: #fff var(--dark) var(--dark) #fff; box-shadow: inset -1px -1px var(--shade); }
.docked { display: flex; gap: 5px; height: 25px; padding: 2px; flex: none; border-bottom: 1px solid var(--shade); }
.docked .raised { height: 22px; padding: 0 2px; }
.docked .wide { gap: 2px; padding: 0 4px; font: bold 12px/14px "Liberation Sans", Arial, sans-serif; }

.status { display: flex; align-items: center; gap: 2px; height: 20px; flex: none; border-top: 1px solid #fff; }
.msg { flex: 1; padding-left: 3px; }
.cell { height: 17px; line-height: 15px; border: 1px solid; border-color: var(--shade) #fff #fff var(--shade); text-align: center; }
.s1 { width: 61px; }
.s2 { width: 110px; text-align: right; padding-right: 2px; }
.s3 { width: 66px; }
.s4 { width: 52px; }
.k { width: 33px; color: var(--shade); }

.taskbar { display: flex; align-items: center; height: 29px; padding: 0 2px; flex: none; border-top: 1px solid #fff; }
.taskbar .raised { height: 23px; }
.start { width: 51px; gap: 1px; padding-left: 1px; font: bold 12px/14px "Liberation Sans", Arial, sans-serif; }
.rail { width: 3px; height: 20px; flex: none; background: #fff; border-right: 1px solid var(--shade); margin: 0 3px 0 7px; }
.quick { display: flex; gap: 7px; flex: 1; padding-left: 4px; }
.tasks { display: flex; gap: 4px; }
.tasks .raised { width: 67px; gap: 3px; padding-left: 4px; }
.tasks .down { background: var(--dither); border-color: var(--dark) #fff #fff var(--dark); box-shadow: none; font: bold 12px/14px "Liberation Sans", Arial, sans-serif; }
.lang { background: #0a246a; color: #fff; line-height: 16px; padding: 0 1px; margin: 0 3px 0 2px; }
.tray { display: flex; align-items: center; gap: 2px; width: 98px; height: 23px; padding-left: 2px; border: 1px solid; border-color: var(--shade) #fff #fff var(--shade); }
.tray time { margin-left: auto; padding-right: 5px; }
```
FILE: grid.js
```js
// Fills the spreadsheet out with empty columns and rows beyond the data.
const COLUMNS = 19;
const BLANK_ROWS = 60;
const cols = document.getElementById("cols");
const rows = document.getElementById("rows");

while (cols.children.length < COLUMNS) {
  const col = document.createElement("col");
  col.className = "c";
  cols.append(col);
}

for (const row of rows.querySelectorAll(".heads, .data")) {
  const extra = row.classList.contains("heads") ? COLUMNS - 6 : COLUMNS - row.cells.length;
  for (let i = 0; i < extra; i++) row.insertCell().className = "out";
}

for (let r = 0; r < BLANK_ROWS; r++) {
  const row = rows.insertRow();
  row.className = "blank";
  for (let i = 0; i < COLUMNS; i++) row.insertCell();
}
```
